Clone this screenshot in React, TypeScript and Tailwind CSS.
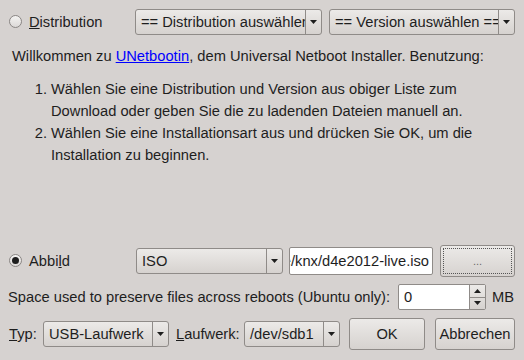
const Arrow = () => (
  <svg width="7" height="4" viewBox="0 0 7 4">
    <path d="M0 0h7L3.5 4z" fill="#1e1e1e" />
  </svg>
);

const Radio = ({ checked }: { checked?: boolean }) => (
  <div className="w-[13px] h-[13px] rounded-full border border-[#8a8684] bg-gradient-to-b from-[#f4f3f2] to-[#dcd9d7] flex items-center justify-center">
    {checked && <div className="w-[7px] h-[7px] rounded-full bg-[#1e1e1e]" />}
  </div>
);

const Combo = ({ text, className }: { text: string; className: string }) => (
  <div className={`flex h-[26px] rounded-[3px] border border-[#8f8b88] bg-gradient-to-b from-[#eceae8] to-[#d6d2cf] ${className}`}>
    <div className="flex-1 min-w-0 overflow-hidden whitespace-nowrap pl-[5px] flex items-center">{text}</div>
    <div className="w-[16px] shrink-0 border-l border-[#8f8b88] flex items-center justify-center">
      <Arrow />
    </div>
  </div>
);

const Button = ({ children, className }: { children: React.ReactNode; className: string }) => (
  <div className={`h-[32px] rounded-[3px] border border-[#8f8b88] bg-gradient-to-b from-[#eceae8] to-[#d6d2cf] flex items-center justify-center ${className}`}>
    {children}
  </div>
);

export default function App() {
  return (
    <div
      className="w-[524px] h-[360px] bg-[#d6d2d0] text-[#1e1e1e] text-[14.7px] overflow-hidden flex flex-col"
      style={{ fontFamily: '"Liberation Sans", Arial, sans-serif' }}
    >
      {/* distribution row */}
      <div className="flex items-center mt-[9px] h-[26px]">
        <div className="w-[135px] flex items-center pl-[9px] gap-[7px]">
          <Radio />
          <span>
            <span className="underline">D</span>istribution
          </span>
        </div>
        <Combo text="== Distribution auswählen ==" className="w-[187px]" />
        <Combo text="== Version auswählen ==" className="w-[186px] ml-[7px]" />
      </div>

      <p className="mt-[10px] pl-[12px] leading-[22px] whitespace-nowrap">
        Willkommen zu <span className="text-[#0000ff] underline">UNetbootin</span>, dem Universal Netboot Installer. Benutzung:
      </p>

      <ol className="mt-[11px] leading-[22px] whitespace-nowrap">
        <li className="flex">
          <span className="w-[51px] text-right pr-[4px] shrink-0">1.</span>
          <span>
            Wählen Sie eine Distribution und Version aus obiger Liste zum
            <br />
            Download oder geben Sie die zu ladenden Dateien manuell an.
          </span>
        </li>
        <li className="flex">
          <span className="w-[51px] text-right pr-[4px] shrink-0">2.</span>
          <span>
            Wählen Sie eine Installationsart aus und drücken Sie OK, um die
            <br />
            Installation zu beginnen.
          </span>
        </li>
      </ol>

      {/* image row */}
      <div className="flex items-center mt-auto h-[32px]">
        <div className="w-[136px] flex items-center pl-[9px] gap-[7px]">
          <Radio checked />
          <span>
            Abbi<span className="underline">l</span>d
          </span>
        </div>
        <Combo text="ISO" className="w-[147px]" />
        <div className="ml-[6px] w-[144px] h-[28px] bg-white border border-[#8f8b88] rounded-[2px] flex items-center justify-end overflow-hidden whitespace-nowrap pr-[3px]">
          /home/knx/d4e2012-live.iso
        </div>
        <Button className="ml-[7px] w-[75px] p-[2px]">
          <div className="w-full h-full border border-dotted border-[#555] flex items-center justify-center text-[#6a6a6a] text-[11px]">
            ...
          </div>
        </Button>
      </div>

      {/* persistence row */}
      <div className="flex items-center mt-[7px] h-[26px]">
        <span className="pl-[8px] w-[398px] whitespace-nowrap">Space used to preserve files across reboots (Ubuntu only):</span>
        <div className="w-[88px] h-[26px] bg-white border border-[#8f8b88] rounded-[2px] flex">
          <div className="flex-1 flex items-center pl-[5px]">0</div>
          <div className="w-[16px] border-l border-[#8f8b88] flex flex-col bg-gradient-to-b from-[#eceae8] to-[#d6d2cf]">
            <div className="flex-1 flex items-center justify-center border-b border-[#8f8b88]">
              <svg width="7" height="4" viewBox="0 0 7 4">
                <path d="M0 4h7L3.5 0z" fill="#1e1e1e" />
              </svg>
            </div>
            <div className="flex-1 flex items-center justify-center">
              <Arrow />
            </div>
          </div>
        </div>
        <span className="ml-[6px]">MB</span>
      </div>

      {/* bottom row */}
      <div className="flex items-center mt-[8px] mb-[10px] h-[32px]">
        <span className="pl-[9px] w-[43px]">
          <span className="underline">T</span>yp:
        </span>
        <Combo text="USB-Laufwerk" className="w-[126px]" />
        <span className="ml-[7px] w-[68px] whitespace-nowrap">
          <span className="underline">L</span>aufwerk:
        </span>
        <Combo text="/dev/sdb1" className="w-[96px]" />
        <Button className="ml-[9px] w-[76px]">OK</Button>
        <Button className="ml-[10px] w-[80px]">Abbrechen</Button>
      </div>
    </div>
  );
}
